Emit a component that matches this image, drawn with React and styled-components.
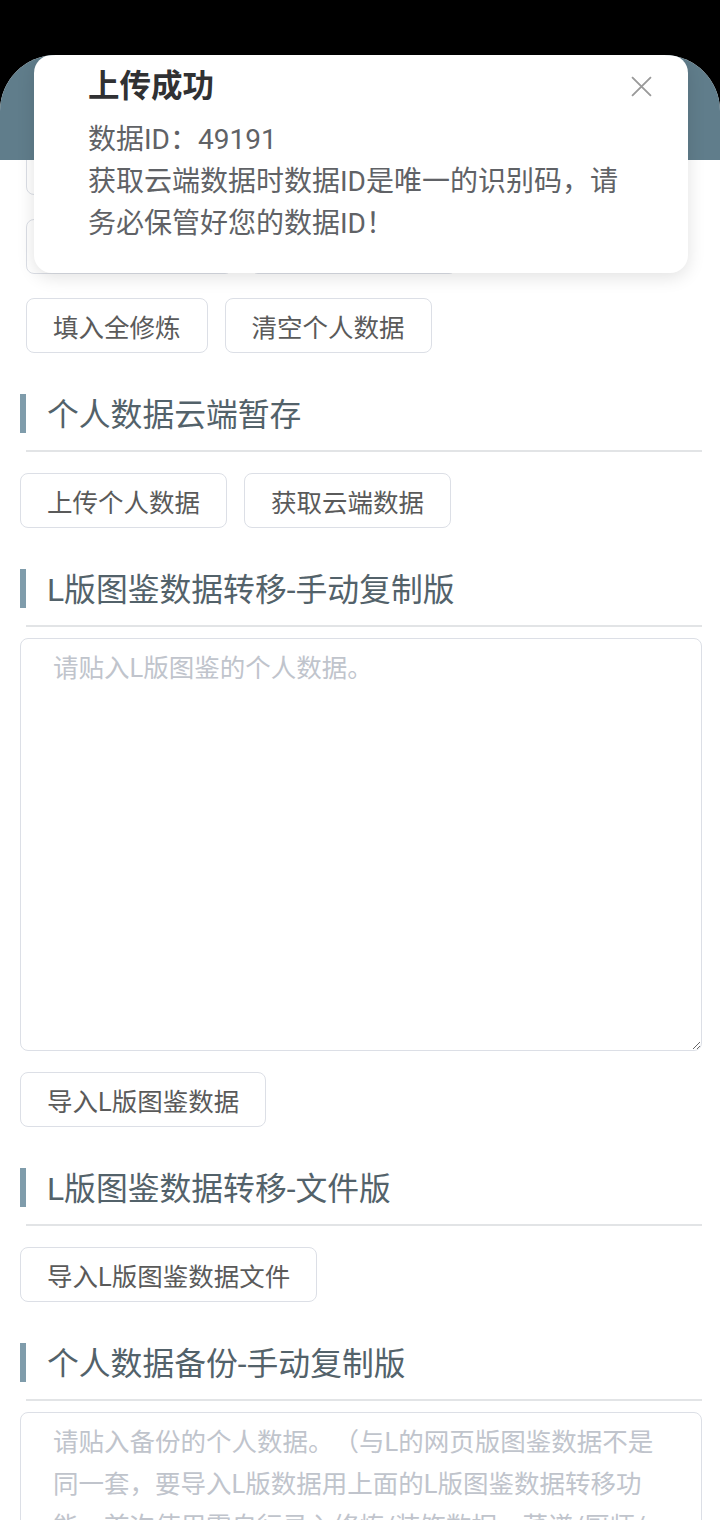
import React from "react";
import styled, { createGlobalStyle } from "styled-components";

const GlobalStyle = createGlobalStyle`
    html, body {
        margin: 0;
        background: #000;
    }
    * {
        box-sizing: border-box;
        text-spacing-trim: space-all;
    }
    body {
        font-family: Roboto, "Noto Sans CJK SC", sans-serif;
    }
`

const StatusBar = styled.div`
    height: 55px;
    background: #000;
`
const Screen = styled.div`
    position: relative;
    height: 1465px;
    background: #fff;
    border-radius: 56px 56px 0 0;
    overflow: hidden;
`
const Header = styled.div`
    position: absolute;
    top: 0;
    left: 0;
    right: 0;
    height: 105px;
    background: #607d8b;
    z-index: 2;
`
const Content = styled.div`
    padding: 85px 18px 0 20px;
`
const TopGroup = styled.div`
    display: flex;
    flex-direction: column;
    gap: 24px;
    padding-left: 6px;
`
const Row = styled.div`
    display: flex;
    gap: 17px;
    margin-top: ${p => p.$top || 0}px;
`
const Button = styled.button`
    height: 55px;
    padding: 0 26px;
    border: 1.5px solid #dcdfe6;
    border-radius: 8px;
    background: #fff;
    color: #5a5a5a;
    font-family: Roboto, "Noto Sans CJK SC", sans-serif;
    font-size: 25.5px;
    white-space: nowrap;
`
const Section = styled.section`
    margin-top: 41px;
`
const Heading = styled.h2`
    display: flex;
    align-items: center;
    height: 39px;
    margin: 0;
    padding-left: 21px;
    padding-bottom: 4px;
    border-left: 6px solid #7f9cab;
    color: #53626a;
    font-size: 31.8px;
    font-weight: 400;
`
const Divider = styled.div`
    margin: 17px 0 0 6px;
    border-top: 2px solid #e2e4e6;
`
const TextBox = styled.textarea`
    display: block;
    width: 100%;
    height: 413px;
    margin-top: 11px;
    padding: 8px 32px;
    border: 1.5px solid #dcdfe6;
    border-radius: 8px;
    font-family: Roboto, "Noto Sans CJK SC", sans-serif;
    font-size: 25.5px;
    line-height: 42px;
    color: #555;
    resize: vertical;

    &::placeholder {
        color: #c0c4cc;
    }
`
const Toast = styled.div`
    position: absolute;
    top: 0;
    left: 34px;
    width: 654px;
    height: 218px;
    padding: 11px 54px 0;
    background: #fff;
    border-radius: 18px;
    box-shadow: 0 4px 18px rgba(0, 0, 0, 0.12);
    z-index: 3;
`
const ToastTitle = styled.div`
    color: #303133;
    font-size: 31.5px;
    font-weight: 700;
    line-height: 42px;
`
const ToastBody = styled.div`
    margin-top: 11px;
    color: #606266;
    font-size: 28px;
    line-height: 42px;
`
const Close = styled.svg`
    position: absolute;
    top: 21px;
    right: 36px;
    width: 21px;
    height: 21px;
`

export default function App() {
    return (
        <>
            <GlobalStyle />
            <StatusBar />
            <Screen>
                <Header />
                <Content>
                    <TopGroup>
                        <Row>
                            <Button>导入个人数据</Button>
                            <Button>导出个人数据</Button>
                        </Row>
                        <Row>
                            <Button>保存个人数据</Button>
                            <Button>读取个人数据</Button>
                        </Row>
                        <Row>
                            <Button>填入全修炼</Button>
                            <Button>清空个人数据</Button>
                        </Row>
                    </TopGroup>

                    <Section>
                        <Heading>个人数据云端暂存</Heading>
                        <Divider />
                        <Row $top={21}>
                            <Button>上传个人数据</Button>
                            <Button>获取云端数据</Button>
                        </Row>
                    </Section>

                    <Section>
                        <Heading>L版图鉴数据转移-手动复制版</Heading>
                        <Divider />
                        <TextBox placeholder="请贴入L版图鉴的个人数据。" />
                        <Row $top={21}>
                            <Button>导入L版图鉴数据</Button>
                        </Row>
                    </Section>

                    <Section>
                        <Heading>L版图鉴数据转移-文件版</Heading>
                        <Divider />
                        <Row $top={21}>
                            <Button>导入L版图鉴数据文件</Button>
                        </Row>
                    </Section>

                    <Section>
                        <Heading>个人数据备份-手动复制版</Heading>
                        <Divider />
                        <TextBox placeholder="请贴入备份的个人数据。（与L的网页版图鉴数据不是同一套，要导入L版数据用上面的L版图鉴数据转移功能，首次使用需自行录入修炼/装饰数据、菜谱/厨师/厨具数据。）" />
                    </Section>
                </Content>

                <Toast>
                    <ToastTitle>上传成功</ToastTitle>
                    <ToastBody>
                        数据ID：49191<br />
                        获取云端数据时数据ID是唯一的识别码，请务必保管好您的数据ID！
                    </ToastBody>
                    <Close viewBox="0 0 20 20">
                        <path d="M1 1 L19 19 M19 1 L1 19" stroke="#9a9a9a" strokeWidth="1.8" fill="none" />
                    </Close>
                </Toast>
            </Screen>
        </>
    );
}
